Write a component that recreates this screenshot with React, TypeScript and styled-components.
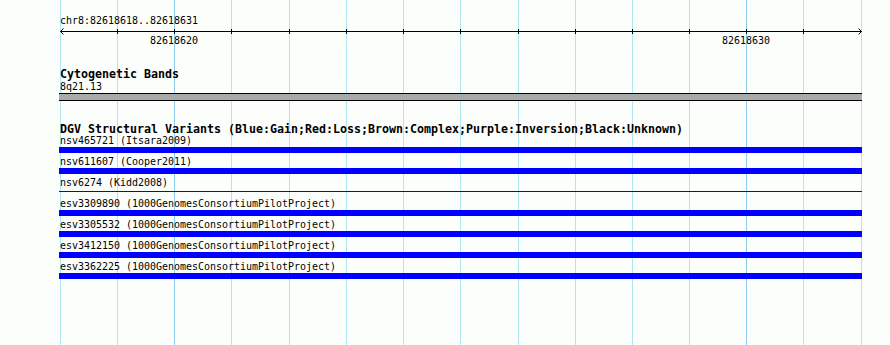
import React from "react";
import styled, { createGlobalStyle } from "styled-components";

const GlobalStyle = createGlobalStyle`
  html, body {
    margin: 0;
    padding: 0;
    background: #fcfefc;
  }
  body {
    font-family: "DejaVu Sans Mono", "Liberation Mono", monospace;
    color: #000;
  }
`;

const ORIGIN = 59;
const GRID_X = [60, 117, 174, 231, 289, 346, 403, 460, 518, 575, 632, 689, 746, 803, 861];
const MAJOR = new Set([174, 746]);
const TICK_LABELS = [
  { x: 174, text: "82618620" },
  { x: 746, text: "82618630" },
];

type Variant = { id: string; source: string; thin?: boolean };
const VARIANTS: Variant[] = [
  { id: "nsv465721", source: "Itsara2009" },
  { id: "nsv611607", source: "Cooper2011" },
  { id: "nsv6274", source: "Kidd2008", thin: true },
  { id: "esv3309890", source: "1000GenomesConsortiumPilotProject" },
  { id: "esv3305532", source: "1000GenomesConsortiumPilotProject" },
  { id: "esv3412150", source: "1000GenomesConsortiumPilotProject" },
  { id: "esv3362225", source: "1000GenomesConsortiumPilotProject" },
];

const Page = styled.div`
  position: relative;
  width: 890px;
  height: 345px;
  overflow: hidden;
  background: #fcfefc;
`;

const GridLayer = styled.svg`
  position: absolute;
  left: 0;
  top: 0;
  pointer-events: none;
`;

const Content = styled.div`
  position: relative;
  margin-left: ${ORIGIN}px;
  width: 803px;
  padding-top: 15px;
  display: flex;
  flex-direction: column;
`;

const SmallText = styled.div`
  font-family: "DejaVu Sans Mono", "Liberation Mono", monospace;
  font-size: 9.97px;
  line-height: 12px;
  height: 12px;
  padding-left: 1px;
  white-space: pre;
`;

const RulerSvg = styled.svg`
  display: block;
  height: 8px;
  width: 803px;
`;

const TickLabelRow = styled.div`
  position: relative;
  height: 12px;
`;

const TickLabel = styled(SmallText)`
  position: absolute;
  top: 0;
  padding-left: 0;
  transform: translateX(-50%);
`;

const TrackTitle = styled.div<{ $top: number; $h: number }>`
  margin-top: ${(p) => p.$top}px;
  font-family: "DejaVu Sans Mono", "Liberation Mono", monospace;
  font-weight: bold;
  font-size: 11.63px;
  line-height: ${(p) => p.$h}px;
  height: ${(p) => p.$h}px;
  padding-left: 1px;
  white-space: pre;
`;

const BandBar = styled.div`
  height: 6px;
  border-top: 1px solid #000;
  border-bottom: 1px solid #000;
  background: #aaaaaa;
`;

const VariantList = styled.div`
  display: flex;
  flex-direction: column;
  gap: 3px;
`;

const VariantRow = styled.div`
  display: flex;
  flex-direction: column;
`;

const VariantGlyph = styled.div<{ $thin?: boolean }>`
  height: 6px;
  position: relative;
  background: ${(p) => (p.$thin ? "transparent" : "#0000ff")};
  ${(p) =>
    p.$thin
      ? `
    &::after {
      content: "";
      position: absolute;
      left: 0;
      right: 0;
      top: 2px;
      height: 1px;
      background: #0000ff;
    }
  `
      : ""}
`;

function Grid() {
  return (
    <GridLayer width={890} height={345}>
      {GRID_X.map((x) => (
        <line
          key={x}
          x1={x + 0.5}
          x2={x + 0.5}
          y1={0}
          y2={345}
          stroke={MAJOR.has(x) ? "#8ccdee" : "#b0e6f0"}
          strokeWidth={1}
        />
      ))}
    </GridLayer>
  );
}

function Ruler() {
  const y = 4.5;
  const x0 = 60 - ORIGIN + 0.5;
  const x1 = 861 - ORIGIN + 0.5;
  return (
    <RulerSvg viewBox="0 0 803 8">
      <line x1={x0} x2={x1} y1={y} y2={y} stroke="#000" strokeWidth={1} />
      <polyline points={`${x0 + 3},${y - 3} ${x0},${y} ${x0 + 3},${y + 3}`} fill="none" stroke="#000" strokeWidth={1} />
      <polyline points={`${x1 - 3},${y - 3} ${x1},${y} ${x1 - 3},${y + 3}`} fill="none" stroke="#000" strokeWidth={1} />
      {GRID_X.slice(1, -1).map((gx) => (
        <line key={gx} x1={gx - ORIGIN + 0.5} x2={gx - ORIGIN + 0.5} y1={2} y2={7} stroke="#000" strokeWidth={1} />
      ))}
    </RulerSvg>
  );
}

export default function App() {
  return (
    <>
      <GlobalStyle />
      <Page>
        <Grid />
        <Content>
          <SmallText>chr8:82618618..82618631</SmallText>
          <Ruler />
          <TickLabelRow>
            {TICK_LABELS.map((t) => (
              <TickLabel key={t.text} style={{ left: t.x - ORIGIN }}>
                {t.text}
              </TickLabel>
            ))}
          </TickLabelRow>
          <TrackTitle $top={21} $h={13}>Cytogenetic Bands</TrackTitle>
          <SmallText>8q21.13</SmallText>
          <BandBar />
          <TrackTitle $top={22} $h={12}>
            DGV Structural Variants (Blue:Gain;Red:Loss;Brown:Complex;Purple:Inversion;Black:Unknown)
          </TrackTitle>
          <VariantList>
            {VARIANTS.map((v) => (
              <VariantRow key={v.id}>
                <SmallText>{`${v.id} (${v.source})`}</SmallText>
                <VariantGlyph $thin={v.thin} />
              </VariantRow>
            ))}
          </VariantList>
        </Content>
      </Page>
    </>
  );
}
